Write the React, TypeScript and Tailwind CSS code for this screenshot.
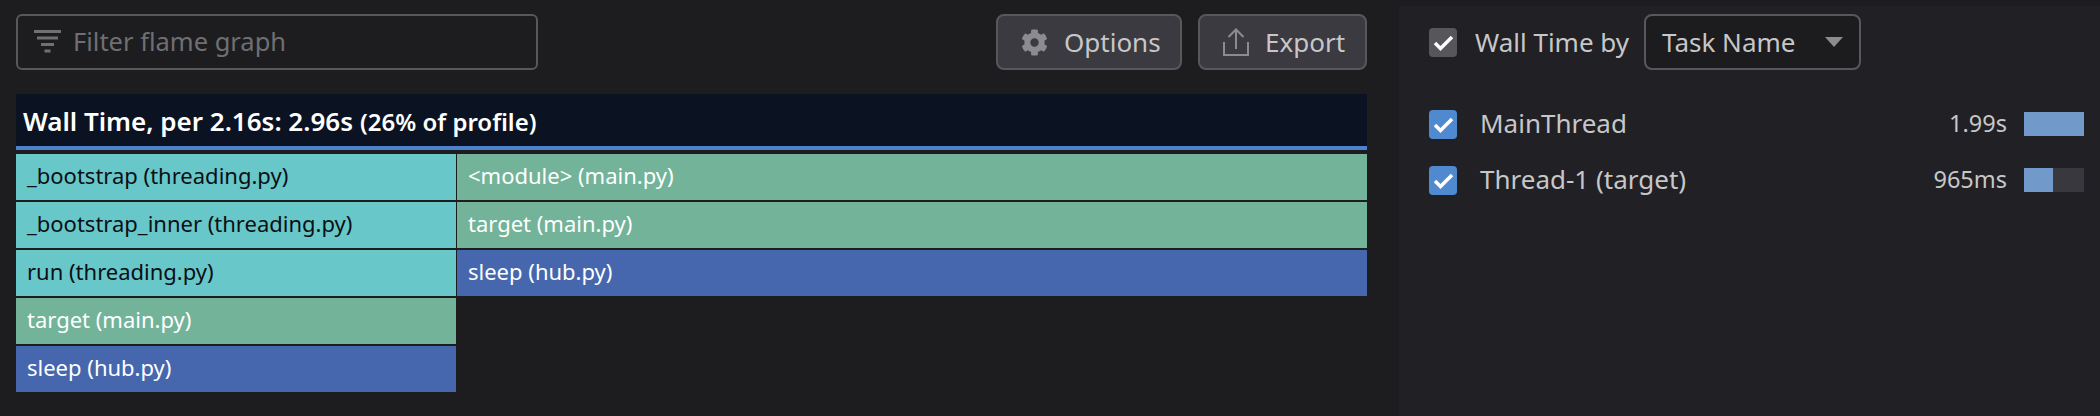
import { FaCog } from "react-icons/fa";

const font = "font-['Noto_Sans',sans-serif]";

type Frame = { label: string; tone: "teal" | "green" | "blue" };

const tones = {
  teal: "bg-[#67c7c9] text-[#0b0f14]",
  green: "bg-[#72b39a] text-white",
  blue: "bg-[#4667ad] text-white",
};

const rows: { left: Frame; right?: Frame }[] = [
  {
    left: { label: "_bootstrap (threading.py)", tone: "teal" },
    right: { label: "<module> (main.py)", tone: "green" },
  },
  {
    left: { label: "_bootstrap_inner (threading.py)", tone: "teal" },
    right: { label: "target (main.py)", tone: "green" },
  },
  {
    left: { label: "run (threading.py)", tone: "teal" },
    right: { label: "sleep (hub.py)", tone: "blue" },
  },
  { left: { label: "target (main.py)", tone: "green" } },
  { left: { label: "sleep (hub.py)", tone: "blue" } },
];

function FrameCell({ frame, className }: { frame: Frame; className: string }) {
  return (
    <div className={`flex h-[46px] items-center pb-[3px] pl-[11px] text-[22px] ${tones[frame.tone]} ${className}`}>
      {frame.label}
    </div>
  );
}

function Check({ className }: { className: string }) {
  return (
    <span className={`flex h-[29px] w-[28px] shrink-0 items-center justify-center rounded-[4px] ${className}`}>
      <svg width="28" height="29" viewBox="0 0 28 29" fill="none">
        <path d="M6 15 L11.5 20.5 L23 9" stroke="white" strokeWidth="3.5" />
      </svg>
    </span>
  );
}

function FilterIcon() {
  return (
    <svg width="28" height="24" viewBox="0 0 28 24" className="shrink-0 fill-[#707074]">
      <rect x="0" y="0" width="27" height="3" />
      <rect x="3" y="6.5" width="21" height="3" />
      <rect x="7" y="13" width="13" height="3" />
      <rect x="10.5" y="19.5" width="6" height="3" />
    </svg>
  );
}

function ExportIcon() {
  return (
    <svg width="26" height="28" viewBox="0 0 26 28" fill="none" className="shrink-0 stroke-[#8c8c90]" strokeWidth="2">
      <path d="M1 14 V27 H25 V14" />
      <path d="M13 21 V2 M5.5 9 L13 1.5 L20.5 9" />
    </svg>
  );
}

function Task({ name, value, pct }: { name: string; value: string; pct: number }) {
  return (
    <div className="flex h-[28px] items-center">
      <Check className="bg-[#4f89cf]" />
      <span className="mb-[2px] ml-[23px] text-[26px] text-[#c7c7c9]">{name}</span>
      <span className="ml-auto text-[23.5px] text-[#c7c7c9]">{value}</span>
      <div className="ml-[17px] h-[24px] w-[60px] bg-[#38383e]">
        <div className="h-full bg-[#7199c9]" style={{ width: `${pct}%` }} />
      </div>
    </div>
  );
}

export default function App() {
  return (
    <div className={`flex h-[416px] w-[2100px] overflow-hidden bg-[#1d1d1f] ${font}`}>
      <div className="w-[1399px] shrink-0 pl-4 pr-[32px] pt-[14px]">
        <div className="flex h-[56px] items-stretch">
          <div className="flex w-[522px] items-center rounded-[6px] border-2 border-[#58585c] pl-4 text-[25.5px] text-[#6f6f73]">
            <FilterIcon />
            <span className="mb-[2px] ml-[11px]">Filter flame graph</span>
          </div>
          <button className="ml-auto flex w-[186px] items-center rounded-[8px] border-2 border-[#58585c] bg-[#3a3a40] pl-[23px] text-[26px] text-[#c7c7c9]">
            <FaCog className="size-[27px] text-[#8c8c90]" />
            <span className="ml-[16px]">Options</span>
          </button>
          <button className="ml-4 flex w-[169px] items-center rounded-[8px] border-2 border-[#58585c] bg-[#3a3a40] pl-[23px] text-[26px] text-[#c7c7c9]">
            <ExportIcon />
            <span className="ml-[16px]">Export</span>
          </button>
        </div>

        <div className="mt-[24px] flex h-[52px] items-center bg-[#0b1222] pl-[7px] pt-[3px] font-semibold text-white">
          <span className="text-[26px]">Wall Time, per 2.16s: 2.96s</span>
          <span className="ml-[7px] text-[24px]">(26% of profile)</span>
        </div>
        <div className="h-1 bg-[#4f82cc]" />

        <div className="mt-1 flex flex-col gap-[2px]">
          {rows.map((row) => (
            <div key={row.left.label + row.left.tone} className="flex gap-px">
              <FrameCell frame={row.left} className="w-[440px] shrink-0" />
              {row.right && <FrameCell frame={row.right} className="flex-1" />}
            </div>
          ))}
        </div>
      </div>

      <div className="mt-[6px] flex-1 bg-[#202025] pl-[30px] pr-[16px] pt-[8px]">
        <div className="flex h-[56px] items-center">
          <Check className="bg-[#56565b]" />
          <span className="ml-[18px] text-[26px] text-[#c7c7c9]">Wall Time by</span>
          <div className="ml-[15px] flex h-full w-[217px] items-center rounded-[8px] border-2 border-[#58585c] bg-[#1c1c1e] pl-[16px] text-[26px] text-[#c7c7c9]">
            Task Name
            <svg width="18" height="10" viewBox="0 0 18 10" className="ml-[30px] fill-[#8c8c90]">
              <polygon points="0,0 18,0 9,10" />
            </svg>
          </div>
        </div>
        <div className="mt-[40px] flex flex-col gap-[28px]">
          <Task name="MainThread" value="1.99s" pct={100} />
          <Task name="Thread-1 (target)" value="965ms" pct={49} />
        </div>
      </div>
    </div>
  );
}
